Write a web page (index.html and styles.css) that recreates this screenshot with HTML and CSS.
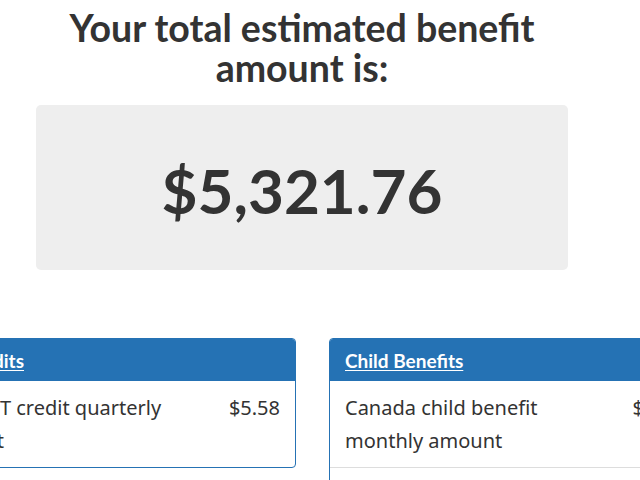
FILE: index.html
```html
<!DOCTYPE html>
<html lang="en">
<head>
<meta charset="utf-8">
<title>Estimated benefits</title>
<link rel="stylesheet" href="styles.css">
</head>
<body>
<main class="page">
  <section class="summary">
    <h1 class="title">Your total estimated benefit amount is:</h1>
    <div class="total-box">
      <p class="total">$5,321.76</p>
    </div>
  </section>
  <section class="cards">
    <div class="card">
      <div class="card-head"><a href="#" class="card-link">Tax Credits</a></div>
      <ul class="rows">
        <li class="row">
          <span class="label">GST/HST credit quarterly amount</span>
          <span class="amount">$5.58</span>
        </li>
      </ul>
    </div>
    <div class="card">
      <div class="card-head"><a href="#" class="card-link">Child Benefits</a></div>
      <ul class="rows">
        <li class="row">
          <span class="label">Canada child benefit monthly amount</span>
          <span class="amount">$91.67</span>
        </li>
        <li class="row">
          <span class="label">Canada child benefit yearly amount</span>
          <span class="amount">$1,100.00</span>
        </li>
      </ul>
    </div>
  </section>
</main>
</body>
</html>
```

FILE: styles.css
```css
html, body {
  margin: 0;
  padding: 0;
  background: #fff;
}
body {
  width: 640px;
  height: 480px;
  overflow: hidden;
  font-family: "Noto Sans", "Open Sans", sans-serif;
  color: #333;
}
.page {
  display: flex;
  flex-direction: column;
}
.summary {
  width: 532px;
  margin-left: 36px;
  display: flex;
  flex-direction: column;
}
.title {
  margin: 8px -40px 0;
  font-family: Lato, sans-serif;
  font-weight: 700;
  font-size: 37.5px;
  line-height: 40px;
  text-align: center;
  color: #333;
  padding: 0 60px;
}
.total-box {
  margin-top: 17px;
  height: 165px;
  background: #eeeeee;
  border-radius: 5px;
  display: flex;
  align-items: center;
  justify-content: center;
}
.total {
  margin: 0;
  font-family: Lato, sans-serif;
  font-weight: 700;
  font-size: 62px;
  line-height: 1;
  color: #333;
  padding-top: 4px;
}
.cards {
  margin-top: 68px;
  margin-left: -86px;
  display: flex;
  gap: 33px;
  align-items: flex-start;
}
.card {
  flex: 0 0 382px;
  border: 1px solid #2572b4;
  border-radius: 4px;
  overflow: hidden;
  box-sizing: border-box;
}
.card-head {
  background: #2572b4;
  padding: 10px 15px 9px;
  height: 42px;
  box-sizing: border-box;
  font-family: Lato, sans-serif;
  font-weight: 700;
  font-size: 19px;
  line-height: 23px;
}
.card-link {
  color: #fff;
  text-decoration: underline;
  text-underline-offset: 2px;
}
.rows {
  list-style: none;
  margin: 0;
  padding: 0;
}
.row {
  display: flex;
  justify-content: space-between;
  align-items: flex-start;
  padding: 10px 15px;
  font-size: 20px;
  line-height: 33px;
  border-top: 1px solid #ddd;
}
.row:first-child {
  border-top: 0;
}
.label {
  flex: 0 0 255px;
}
.amount {
  text-align: right;
}
```
